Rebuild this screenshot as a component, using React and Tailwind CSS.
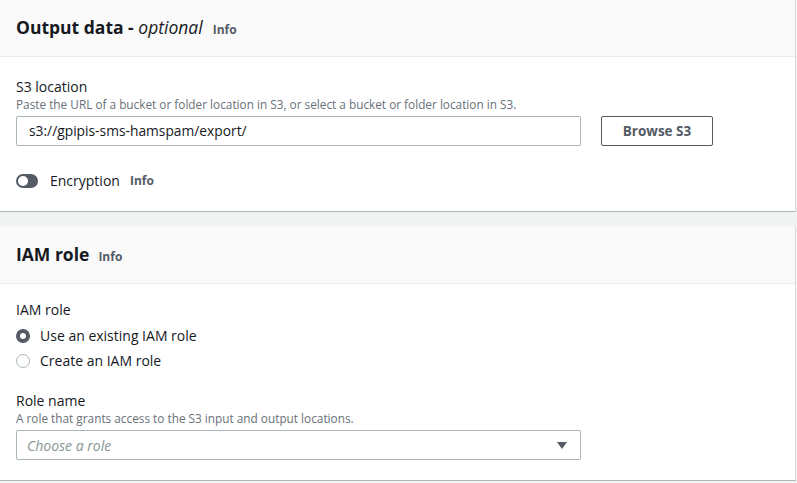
export default function App() {
  const font = { fontFamily: '"Open Sans", "Noto Sans", Arial, sans-serif' }

  return (
    <div className="w-[797px] h-[483px] bg-[#f2f3f3] overflow-hidden text-[#16191f]" style={font}>
      <section className="w-[796px] bg-white border-r border-[#d5dbdb] border-b border-b-[#aab7b8]">
        <div className="h-[57px] bg-[#fafafa] border-b border-[#eaeded] px-4 flex items-center">
          <h2 className="text-[17.5px] font-bold leading-none">
            Output data - <span className="italic font-normal">optional</span>
          </h2>
          <span className="ml-[10px] text-[12px] font-bold text-[#545b64] mt-[3px]">Info</span>
        </div>
        <div className="px-4 pt-[20px] pb-[20px]">
          <div className="text-[14px] leading-[20px]">S3 location</div>
          <div className="text-[11.8px] leading-[14px] text-[#687078]">
            Paste the URL of a bucket or folder location in S3, or select a bucket or folder location in S3.
          </div>
          <div className="flex items-center mt-[5px]">
            <div className="w-[565px] h-[30px] border border-[#aab7b8] rounded-[2px] px-[12px] flex items-center text-[13.8px]">
              s3://gpipis-sms-hamspam/export/
            </div>
            <button className="ml-[20px] w-[112px] h-[30px] border border-[#545b64] rounded-[2px] text-[13.5px] font-bold text-[#545b64]">
              Browse S3
            </button>
          </div>
          <div className="flex items-center mt-[24px]">
            <div className="w-[22px] h-[14px] rounded-full bg-[#545b64] flex items-center pl-[2px]">
              <div className="w-[10px] h-[10px] rounded-full bg-white"></div>
            </div>
            <span className="ml-[12px] text-[14px] text-[#16191f]">Encryption</span>
            <span className="ml-[10px] text-[12px] font-bold text-[#545b64]">Info</span>
          </div>
        </div>
      </section>

      <section className="mt-[15px] w-[796px] bg-white border-r border-[#d5dbdb] border-b border-b-[#aab7b8]">
        <div className="h-[57px] bg-[#fafafa] border-b border-[#eaeded] px-4 flex items-center">
          <h2 className="text-[17.5px] font-bold leading-none">IAM role</h2>
          <span className="ml-[9px] text-[12px] font-bold text-[#545b64] mt-[3px]">Info</span>
        </div>
        <div className="px-4 pt-[16px] pb-[20px]">
          <div className="text-[14px] leading-[20px]">IAM role</div>
          <div className="mt-[6px] flex flex-col gap-[5px]">
            <label className="flex items-center text-[14px] leading-[20px]">
              <span className="w-[14px] h-[14px] rounded-full border-[4px] border-[#545b64] bg-white"></span>
              <span className="ml-[10px]">Use an existing IAM role</span>
            </label>
            <label className="flex items-center text-[14px] leading-[20px]">
              <span className="w-[14px] h-[14px] rounded-full border border-[#aab7b8] bg-white"></span>
              <span className="ml-[10px]">Create an IAM role</span>
            </label>
          </div>
          <div className="mt-[20px] text-[14px] leading-[20px]">Role name</div>
          <div className="text-[11.8px] leading-[14px] text-[#687078]">
            A role that grants access to the S3 input and output locations.
          </div>
          <div className="mt-[5px] w-[565px] h-[30px] border border-[#aab7b8] rounded-[2px] pl-[10px] pr-[12px] flex items-center justify-between">
            <span className="italic text-[14px] text-[#879596]">Choose a role</span>
            <svg width="12" height="9" viewBox="0 0 12 9">
              <path d="M1 1h10L6 8z" fill="#545b64" />
            </svg>
          </div>
        </div>
      </section>
    </div>
  )
}
